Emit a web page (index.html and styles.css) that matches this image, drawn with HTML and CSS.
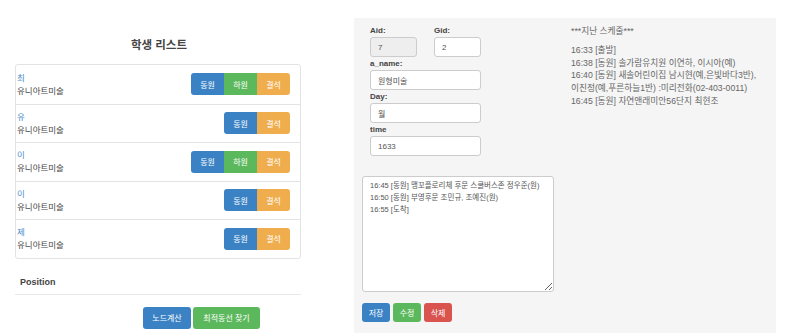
FILE: index.html
```
<!DOCTYPE html>
<html lang="ko">
<head>
  <meta charset="UTF-8">
  <title>학생 리스트</title>
  <link rel="stylesheet" href="styles.css">
</head>
<body>
  <div class="page">
    <!-- Student list -->
    <div class="left">
      <h2 class="title">학생 리스트</h2>
      <div class="list">
        <div class="row">
          <div class="info"><span class="name">최</span><span class="org">유니아트미술</span></div>
          <div class="btns"><button class="btn blue">동원</button><button class="btn green">하원</button><button class="btn orange">결석</button></div>
        </div>
        <div class="row">
          <div class="info"><span class="name">유</span><span class="org">유니아트미술</span></div>
          <div class="btns"><button class="btn blue">동원</button><button class="btn orange">결석</button></div>
        </div>
        <div class="row">
          <div class="info"><span class="name">이</span><span class="org">유니아트미술</span></div>
          <div class="btns"><button class="btn blue">동원</button><button class="btn green">하원</button><button class="btn orange">결석</button></div>
        </div>
        <div class="row">
          <div class="info"><span class="name">이</span><span class="org">유니아트미술</span></div>
          <div class="btns"><button class="btn blue">동원</button><button class="btn orange">결석</button></div>
        </div>
        <div class="row">
          <div class="info"><span class="name">제</span><span class="org">유니아트미술</span></div>
          <div class="btns"><button class="btn blue">동원</button><button class="btn orange">결석</button></div>
        </div>
      </div>
      <div class="position">Position</div>
      <div class="actions">
        <button class="btn blue node-btn">노드계산</button><button class="btn green route-btn">최적동선 찾기</button>
      </div>
    </div>

    <!-- Schedule editor -->
    <div class="panel">
      <div class="form">
        <div class="fields">
          <div class="pair">
            <div class="field">
              <label>Aid:</label>
              <input type="text" class="input small" value="7" disabled>
            </div>
            <div class="field">
              <label>Gid:</label>
              <input type="text" class="input small" value="2">
            </div>
          </div>
          <label>a_name:</label>
          <input type="text" class="input" value="원형미술">
          <label>Day:</label>
          <input type="text" class="input" value="월">
          <label>time</label>
          <input type="text" class="input" value="1633">
        </div>
        <textarea class="memo">16:45 [동원] 맹꼬플로리체 후문 스쿨버스존 정우준(원)
16:50 [동원] 부영후문 조민규, 조예진(원)
16:55 [도착]</textarea>
        <div class="save-btns">
          <button class="btn blue">저장</button><button class="btn green">수정</button><button class="btn red">삭제</button>
        </div>
      </div>
      <div class="history">
        <p class="history-title">***지난 스케줄***</p>
        <p>16:33 [출발]<br>
        16:38 [동원] 솔가람유치원 이연하, 이시아(예)<br>
        16:40 [동원] 새솔어린이집 남시현(예,은빛바다3반),<br>
        이진정(예,푸른하늘1반) :미리전화(02-403-0011)<br>
        16:45 [동원] 자연앤래미안56단지 최현조</p>
      </div>
    </div>
  </div>
</body>
</html>
```
FILE: styles.css
```
* {
  margin: 0;
  padding: 0;
  box-sizing: border-box;
}

body {
  font-family: "Liberation Sans", "Noto Sans CJK KR", sans-serif;
  background: #fff;
  color: #333;
}

.page {
  display: flex;
  align-items: flex-start;
  height: 333px;
  overflow: hidden;
}

/* Left column */
.left {
  width: 286px;
  margin-left: 15px;
}

.title {
  margin-top: 37px;
  font-size: 11.5px;
  line-height: 16px;
  font-weight: bold;
  text-align: center;
  color: #444;
  padding-left: 2px;
}

.list {
  margin-top: 11px;
  border: 1px solid #e3e3e3;
  border-radius: 3px;
}

.row {
  height: 38.5px;
  display: flex;
  align-items: center;
  justify-content: space-between;
  padding: 0 10px 0 1px;
}

.row + .row {
  border-top: 1px solid #e3e3e3;
}

.info {
  display: flex;
  flex-direction: column;
  font-size: 8.5px;
  line-height: 13px;
  padding-top: 1px;
}

.name {
  color: #4a8ccb;
}

.org {
  color: #444;
}

.btns {
  display: flex;
}

.btn {
  font-family: "Noto Sans CJK KR", sans-serif;
  border: none;
  color: #fff;
  font-size: 8px;
  height: 22px;
  width: 33px;
  border-radius: 3px;
}

.btns .btn {
  border-radius: 0;
}

.btns .btn:first-child {
  border-radius: 3px 0 0 3px;
}

.btns .btn:last-child {
  border-radius: 0 3px 3px 0;
}

.blue { background: #3a82c4; }
.green { background: #5cb85c; }
.orange { background: #f0ad4e; }
.red { background: #d9534f; }

.position {
  margin-top: 17px;
  padding: 0 0 5px 5px;
  font-size: 9px;
  line-height: 13px;
  font-weight: bold;
  color: #444;
  border-bottom: 1px solid #e8e8e8;
}

.actions {
  margin-top: 12px;
  margin-left: 128px;
  display: flex;
  gap: 2px;
}

.node-btn {
  width: 48px;
}

.route-btn {
  width: 67px;
}

/* Right panel */
.panel {
  margin-left: 53px;
  margin-top: 18px;
  width: 422px;
  height: 315px;
  background: #f5f5f5;
  display: flex;
  padding: 6px 0 0 8px;
}

.form {
  width: 192px;
}

.fields {
  padding-left: 8px;
  display: flex;
  flex-direction: column;
  width: 119px;
}

.fields label {
  display: block;
  font-size: 8px;
  line-height: 13px;
  font-weight: bold;
  color: #444;
}

.pair {
  display: flex;
  gap: 17px;
}

.field {
  display: flex;
  flex-direction: column;
}

.input {
  height: 20px;
  width: 111px;
  border: 1px solid #ccc;
  border-radius: 3px;
  background: #fff;
  font-family: "Liberation Sans", "Noto Sans CJK KR", sans-serif;
  font-size: 8px;
  color: #555;
  padding: 0 7px;
}

.input.small {
  width: 47px;
}

.input:disabled {
  background: #eee;
}

.memo {
  display: block;
  margin-top: 20px;
  width: 192px;
  height: 116px;
  border: 1px solid #ccc;
  border-radius: 3px;
  background: #fff;
  font-family: "Liberation Sans", "Noto Sans CJK KR", sans-serif;
  font-size: 7.5px;
  line-height: 12px;
  color: #555;
  padding: 3px 7px;
  resize: vertical;
}

.save-btns {
  margin-top: 11px;
  display: flex;
  gap: 3px;
}

.save-btns .btn {
  width: 28px;
  height: 19px;
}

.history {
  margin-left: 17px;
  font-size: 8.7px;
  line-height: 12.8px;
  color: #666;
}

.history-title {
  margin-top: 1px;
  margin-bottom: 6px;
}
```
